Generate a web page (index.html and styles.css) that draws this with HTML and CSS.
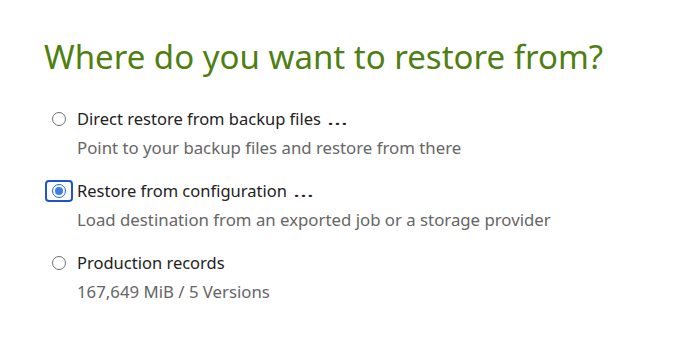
FILE: index.html
```html
<!DOCTYPE html>
<html>
<head>
<meta charset="utf-8">
<link rel="stylesheet" href="styles.css">
</head>
<body>
<main class="page">
  <h1 class="title">Where do you want to restore from?</h1>
  <ul class="options">
    <li class="option">
      <div class="row">
        <span class="radio-wrap"><span class="radio"></span></span>
        <span class="label">Direct restore from backup files <span class="ellipsis">…</span></span>
      </div>
      <div class="desc">Point to your backup files and restore from there</div>
    </li>
    <li class="option">
      <div class="row">
        <span class="radio-wrap focused"><span class="radio checked"></span></span>
        <span class="label">Restore from configuration <span class="ellipsis">…</span></span>
      </div>
      <div class="desc">Load destination from an exported job or a storage provider</div>
    </li>
    <li class="option">
      <div class="row">
        <span class="radio-wrap"><span class="radio"></span></span>
        <span class="label">Production records</span>
      </div>
      <div class="desc">167,649 MiB / 5 Versions</div>
    </li>
  </ul>
</main>
</body>
</html>
```
FILE: styles.css
```css
html, body {
  margin: 0;
  padding: 0;
  background: #ffffff;
}
.page {
  padding: 37px 0 0 44px;
  font-family: "Noto Sans", "Open Sans", sans-serif;
}
.title {
  margin: 0 0 30px 0;
  font-size: 33px;
  font-weight: 400;
  line-height: 40px;
  color: #4f7f12;
}
.options {
  list-style: none;
  margin: 0;
  padding: 0;
  display: flex;
  flex-direction: column;
  gap: 19px;
}
.row {
  display: flex;
  align-items: center;
  height: 24px;
}
.radio-wrap {
  width: 28px;
  height: 22px;
  box-sizing: border-box;
  border: 2px solid transparent;
  border-radius: 4px;
  display: flex;
  align-items: center;
  justify-content: center;
  margin-left: 1px;
  margin-right: 4px;
}
.radio-wrap.focused {
  border-color: #1f55c8;
}
.radio {
  width: 14px;
  height: 14px;
  box-sizing: border-box;
  border-radius: 50%;
  border: 1px solid #6f6f6f;
  background: #fff;
  position: relative;
}
.radio.checked {
  border-color: #2563d9;
}
.radio.checked::after {
  content: "";
  position: absolute;
  left: 2px;
  top: 2px;
  width: 8px;
  height: 8px;
  border-radius: 50%;
  background: #3b7cf0;
}
.label {
  font-size: 16.5px;
  line-height: 24px;
  color: #222;
}
.ellipsis {
  display: inline-block;
  margin-left: 2px;
  transform: scaleX(1.6);
  transform-origin: left center;
}
.desc {
  margin: 5px 0 0 33px;
  font-size: 16.8px;
  line-height: 24px;
  color: #666;
}
```
